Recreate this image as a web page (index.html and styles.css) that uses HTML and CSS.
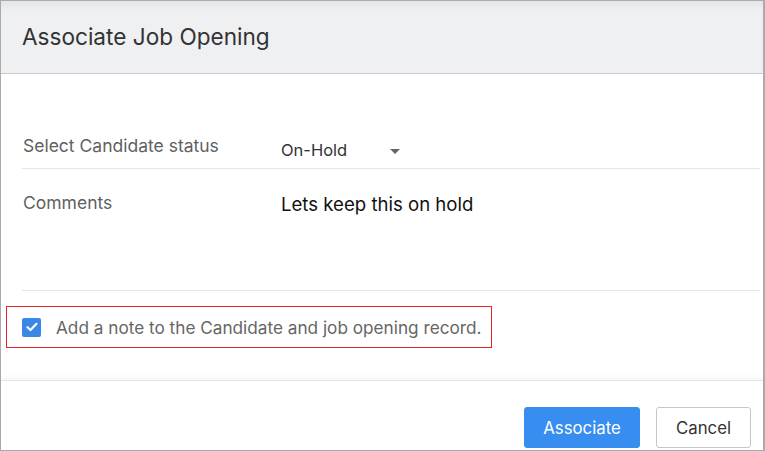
FILE: index.html
```html
<!DOCTYPE html>
<html lang="en">
<head>
  <meta charset="UTF-8">
  <meta name="viewport" content="width=device-width, initial-scale=1.0">
  <title>Associate Job Opening</title>
  <link rel="stylesheet" href="styles.css">
</head>
<body>
  <div class="dialog">
    <div class="dialog-header">
      <h1>Associate Job Opening</h1>
    </div>

    <div class="dialog-body">
      <div class="field-row status-row">
        <div class="field-label">Select Candidate status</div>
        <div class="field-value select-value">
          <span>On-Hold</span>
          <span class="caret"></span>
        </div>
      </div>
      <div class="field-row comments-row">
        <div class="field-label">Comments</div>
        <div class="field-value comment-text">Lets keep this on hold</div>
      </div>
    </div>

    <div class="note-wrap">
      <label class="note-box">
        <span class="check">
          <svg width="12" height="10" viewBox="0 0 12 10">
            <path d="M1.5 5.2 L4.5 8 L10.5 1.8" fill="none" stroke="#fff" stroke-width="2.2" stroke-linecap="round" stroke-linejoin="round"/>
          </svg>
        </span>
        <span class="note-text">Add a note to the Candidate and job opening record.</span>
      </label>
    </div>

    <div class="dialog-footer">
      <button class="btn btn-primary">Associate</button>
      <button class="btn btn-default">Cancel</button>
    </div>
  </div>
</body>
</html>
```

FILE: styles.css
```css
* {
  box-sizing: border-box;
  margin: 0;
  padding: 0;
  font-family: 'Inter', 'Noto Sans', sans-serif;
}

body {
  background: #fff;
  width: 765px;
  height: 451px;
  overflow: hidden;
}

.dialog {
  display: flex;
  flex-direction: column;
  width: 765px;
  height: 451px;
  border: 1px solid #ababab;
  border-right-width: 2px;
  background: #fff;
}

.dialog-header {
  height: 73px;
  padding: 0 0 0 21px;
  display: flex;
  align-items: center;
  background: linear-gradient(#e4e5e7, #eff0f2 10px);
  border-bottom: 1px solid #c9cacd;
}

.dialog-header h1 {
  font-size: 22.6px;
  font-weight: 400;
  color: #333;
  padding-bottom: 2px;
}

.dialog-body {
  padding: 0 3px 0 21px;
}

.field-row {
  display: flex;
  align-items: flex-start;
  border-bottom: 1px solid #e6e6e6;
  line-height: 20px;
}

.status-row {
  padding: 62px 0 8px;
}

.comments-row {
  padding-top: 24px;
  height: 122px;
}

.field-label {
  width: 259px;
  padding-left: 1px;
  font-size: 17.5px;
  color: #5f5f5f;
}

.field-value {
  font-size: 16.5px;
  color: #333;
}

.select-value {
  display: flex;
  align-items: center;
  padding-top: 4px;
}

.caret {
  width: 0;
  height: 0;
  margin-left: 43px;
  margin-top: 2px;
  border-left: 5.5px solid transparent;
  border-right: 5.5px solid transparent;
  border-top: 5px solid #666;
}

.comment-text {
  font-size: 18.6px;
  color: #111;
  padding-top: 1px;
}

.note-wrap {
  padding: 15px 0 0 5px;
}

.note-box {
  display: inline-flex;
  align-items: center;
  height: 42px;
  padding: 0 10px 0 15px;
  border: 1px solid #e3242b;
}

.check {
  width: 19px;
  height: 19px;
  border-radius: 2px;
  background: #3b87e6;
  display: flex;
  align-items: center;
  justify-content: center;
  margin-right: 15px;
}

.note-text {
  font-size: 17.2px;
  color: #666;
}

.dialog-footer {
  margin-top: auto;
  height: 70px;
  display: flex;
  justify-content: flex-end;
  align-items: flex-end;
  gap: 16px;
  padding: 0 12px 2px 0;
  border-top: 1px solid #e4e4e4;
  box-shadow: 0 -3px 4px rgba(0, 0, 0, 0.04);
}

.btn {
  height: 41px;
  font-size: 16.8px;
  border-radius: 3px;
  cursor: pointer;
}

.btn-primary {
  width: 116px;
  background: #378ef0;
  border: 1px solid #378ef0;
  color: #fff;
}

.btn-default {
  width: 95px;
  background: #fff;
  border: 1px solid #c6c6c6;
  color: #333;
}
```
